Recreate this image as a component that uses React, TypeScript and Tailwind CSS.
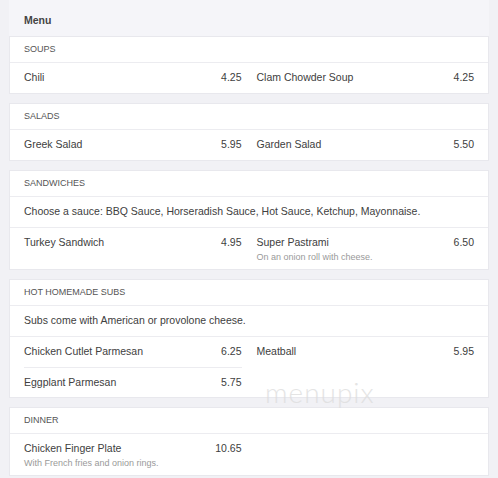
type Item = { name: string; price: string; note?: string };
type Section = { title: string; intro?: string; items: Item[] };

const sections: Section[] = [
  {
    title: "SOUPS",
    items: [
      { name: "Chili", price: "4.25" },
      { name: "Clam Chowder Soup", price: "4.25" },
    ],
  },
  {
    title: "SALADS",
    items: [
      { name: "Greek Salad", price: "5.95" },
      { name: "Garden Salad", price: "5.50" },
    ],
  },
  {
    title: "SANDWICHES",
    intro: "Choose a sauce: BBQ Sauce, Horseradish Sauce, Hot Sauce, Ketchup, Mayonnaise.",
    items: [
      { name: "Turkey Sandwich", price: "4.95" },
      { name: "Super Pastrami", price: "6.50", note: "On an onion roll with cheese." },
    ],
  },
  {
    title: "HOT HOMEMADE SUBS",
    intro: "Subs come with American or provolone cheese.",
    items: [
      { name: "Chicken Cutlet Parmesan", price: "6.25" },
      { name: "Meatball", price: "5.95" },
      { name: "Eggplant Parmesan", price: "5.75" },
    ],
  },
  {
    title: "DINNER",
    items: [{ name: "Chicken Finger Plate", price: "10.65", note: "With French fries and onion rings." }],
  },
];

function MenuItem({ item, first }: { item: Item; first: boolean }) {
  return (
    <div className={`min-h-[30px] pt-[7px] pb-[6px] ${first ? "" : "border-t border-[#ececf0]"}`}>
      <div className="flex justify-between text-[10.5px] leading-[14px] text-[#404040]">
        <span>{item.name}</span>
        <span>{item.price}</span>
      </div>
      {item.note && <div className="mt-[2px] text-[9px] leading-[12px] text-[#9a9a9a]">{item.note}</div>}
    </div>
  );
}

function MenuSection({ section }: { section: Section }) {
  return (
    <div className="bg-white border border-[#e8e8ed]">
      <div className="h-[26px] px-[14px] flex items-center border-b border-[#ececf0] text-[9px] text-[#555]">
        {section.title}
      </div>
      {section.intro && (
        <div className="h-[31px] px-[14px] flex items-center border-b border-[#ececf0] text-[10.5px] text-[#404040]">
          {section.intro}
        </div>
      )}
      <div className="grid grid-cols-2 gap-x-[15px] px-[14px]">
        {section.items.map((item, i) => (
          <MenuItem key={item.name} item={item} first={i < 2} />
        ))}
      </div>
    </div>
  );
}

export default function App() {
  return (
    <div
      className="relative w-[498px] h-[478px] overflow-hidden bg-[#f1f1f5] pl-[9px] pr-[9px]"
      style={{ fontFamily: '"Liberation Sans", Arial, sans-serif' }}
    >
      <div className="h-[36px] bg-[#f5f5f9] px-[15px] pt-[5px] flex items-center">
        <span className="text-[10.5px] font-bold text-[#444]">Menu</span>
      </div>
      <div className="flex flex-col gap-[9px]">
        {sections.map((s) => (
          <MenuSection key={s.title} section={s} />
        ))}
      </div>
      <div
        className="absolute left-[265px] top-[371px] text-[28px] font-light tracking-[1px] text-[#dedede] opacity-80 pointer-events-none"
        style={{ fontFamily: "Lato, sans-serif" }}
      >
        menupix
      </div>
    </div>
  );
}
